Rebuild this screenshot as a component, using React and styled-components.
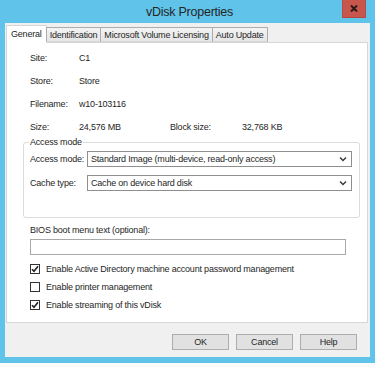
import React from 'react';
import styled, { createGlobalStyle } from 'styled-components';

const Global = createGlobalStyle`
  html, body { margin: 0; padding: 0; background: #fbfbfb; }
  body { font-family: "Liberation Sans", Arial, sans-serif; color: #262626; }
  * { box-sizing: border-box; }
`;

const details = [
  { label: 'Site:', value: 'C1' },
  { label: 'Store:', value: 'Store' },
  { label: 'Filename:', value: 'w10-103116' },
];

const checks = [
  { text: 'Enable Active Directory machine account password management', on: true },
  { text: 'Enable printer management', on: false },
  { text: 'Enable streaming of this vDisk', on: true },
];

const tabs = ['General', 'Identification', 'Microsoft Volume Licensing', 'Auto Update'];

function Chevron() {
  return (
    <svg width="8" height="6" viewBox="0 0 8 6">
      <polyline points="1,1.5 4,4.5 7,1.5" fill="none" stroke="#333" strokeWidth="1.3" />
    </svg>
  );
}

function Tick() {
  return (
    <svg width="8" height="8" viewBox="0 0 8 8">
      <polyline points="1,4.2 3,6.3 7,1.3" fill="none" stroke="#222" strokeWidth="1.6" />
    </svg>
  );
}

function App() {
  return (
    <>
      <Global />
      <Window>
        <TitleBar>
          <span />
          <Title>vDisk Properties</Title>
          <CloseButton>
            <svg width="8" height="7" viewBox="0 0 8 7">
              <path d="M1 0.5 L7 6.5 M7 0.5 L1 6.5" stroke="#2a1a1a" strokeWidth="2" />
            </svg>
          </CloseButton>
        </TitleBar>
        <Client>
          <TabStrip>
            {tabs.map((t, i) => (
              <Tab key={t} $active={i === 0}>{t}</Tab>
            ))}
          </TabStrip>
          <Panel>
            {details.map(d => (
              <InfoRow key={d.label}>
                <InfoLabel>{d.label}</InfoLabel>
                <span>{d.value}</span>
              </InfoRow>
            ))}
            <InfoRow>
              <InfoLabel>Size:</InfoLabel>
              <SizeValue>24,576 MB</SizeValue>
              <BlockLabel>Block size:</BlockLabel>
              <span>32,768 KB</span>
            </InfoRow>
            <GroupBox>
              <GroupTitle>Access mode</GroupTitle>
              <SelectRow>
                <SelectLabel>Access mode:</SelectLabel>
                <Select>
                  <span>Standard Image (multi-device, read-only access)</span>
                  <Chevron />
                </Select>
              </SelectRow>
              <SelectRow>
                <SelectLabel>Cache type:</SelectLabel>
                <Select>
                  <span>Cache on device hard disk</span>
                  <Chevron />
                </Select>
              </SelectRow>
            </GroupBox>
            <FieldLabel>BIOS boot menu text (optional):</FieldLabel>
            <TextBox />
            <CheckList>
              {checks.map(c => (
                <CheckRow key={c.text}>
                  <CheckBox>{c.on && <Tick />}</CheckBox>
                  <span>{c.text}</span>
                </CheckRow>
              ))}
            </CheckList>
          </Panel>
          <Footer>
            <Button>OK</Button>
            <Button>Cancel</Button>
            <Button>Help</Button>
          </Footer>
        </Client>
      </Window>
    </>
  );
}

export default App;

const Window = styled.div`
  width: 375px;
  height: 363px;
  background: #5fc3ea;
  display: flex;
  flex-direction: column;
`;

const TitleBar = styled.div`
  height: 23px;
  display: grid;
  grid-template-columns: 1fr auto 1fr;
`;

const Title = styled.div`
  font-size: 12.5px;
  letter-spacing: -0.25px;
  line-height: 24px;
  color: #262626;
  padding-left: 4px;
`;

const CloseButton = styled.div`
  justify-self: end;
  margin-right: 9px;
  width: 24px;
  height: 18px;
  background: #c9564d;
  border: 1px solid #b44a42;
  border-top: none;
  display: flex;
  align-items: center;
  justify-content: center;
`;

const Client = styled.div`
  flex: 1;
  margin: 0 5px 6px 5px;
  background: #f0f0f0;
  display: flex;
  flex-direction: column;
  padding: 2px 2px 0 1px;
  font-size: 9px;
  letter-spacing: -0.2px;
`;

const TabStrip = styled.div`
  display: flex;
  align-items: flex-end;
  height: 17px;
  position: relative;
  z-index: 1;
`;

const Tab = styled.div`
  height: ${p => (p.$active ? '18px' : '15px')};
  margin-bottom: ${p => (p.$active ? '-1px' : '0')};
  padding: 0 ${p => (p.$active ? '4px' : '3px')};
  line-height: ${p => (p.$active ? '16px' : '14px')};
  background: ${p => (p.$active ? '#fff' : 'linear-gradient(#f3f3f3, #e6e6e6)')};
  border: 1px solid ${p => (p.$active ? '#d6d6d6' : '#acacac')};
  border-bottom: ${p => (p.$active ? 'none' : '1px solid #d6d6d6')};
  margin-left: ${p => (p.$active ? '0' : '-1px')};
  white-space: nowrap;
`;

const Panel = styled.div`
  height: 281px;
  background: #fff;
  border: 1px solid #d6d6d6;
  padding: 3px 6px 0 16px;
`;

const InfoRow = styled.div`
  display: flex;
  align-items: center;
  height: 23px;
  padding-left: 7px;
`;

const InfoLabel = styled.span`
  width: 49px;
`;

const SizeValue = styled.span`
  width: 91px;
`;

const BlockLabel = styled.span`
  width: 72px;
`;

const GroupBox = styled.div`
  position: relative;
  margin-top: 4px;
  width: 337px;
  height: 76px;
  border: 1px solid #dcdcdc;
  border-radius: 3px;
  padding: 8px 7px 0 6px;
  display: flex;
  flex-direction: column;
  gap: 8px;
`;

const GroupTitle = styled.span`
  position: absolute;
  top: -7px;
  left: 5px;
  padding: 0 1px;
  background: #fff;
  line-height: 12px;
`;

const SelectRow = styled.div`
  display: flex;
  align-items: center;
`;

const SelectLabel = styled.span`
  width: 57px;
`;

const Select = styled.div`
  flex: 1;
  height: 16px;
  border: 1px solid #8f8f8f;
  background: #fff;
  display: flex;
  align-items: center;
  justify-content: space-between;
  padding: 0 4px 0 3px;
`;

const FieldLabel = styled.div`
  margin-top: 7px;
  padding-left: 7px;
  line-height: 11px;
`;

const TextBox = styled.div`
  margin: 3px 0 0 7px;
  width: 316px;
  height: 16px;
  border: 1px solid #a8a8a8;
  background: #fff;
`;

const CheckList = styled.div`
  margin-top: 5px;
  padding-left: 7px;
`;

const CheckRow = styled.div`
  display: flex;
  align-items: center;
  gap: 6px;
  height: 18px;
`;

const CheckBox = styled.span`
  width: 10px;
  height: 10px;
  border: 1px solid #333;
  background: #fff;
  display: flex;
  align-items: center;
  justify-content: center;
`;

const Footer = styled.div`
  flex: 1;
  display: flex;
  justify-content: flex-end;
  gap: 7px;
  padding: 11px 11px 0 0;
`;

const Button = styled.div`
  width: 57px;
  height: 16px;
  border: 1px solid #adadad;
  background: #e1e1e1;
  display: flex;
  align-items: center;
  justify-content: center;
`;
